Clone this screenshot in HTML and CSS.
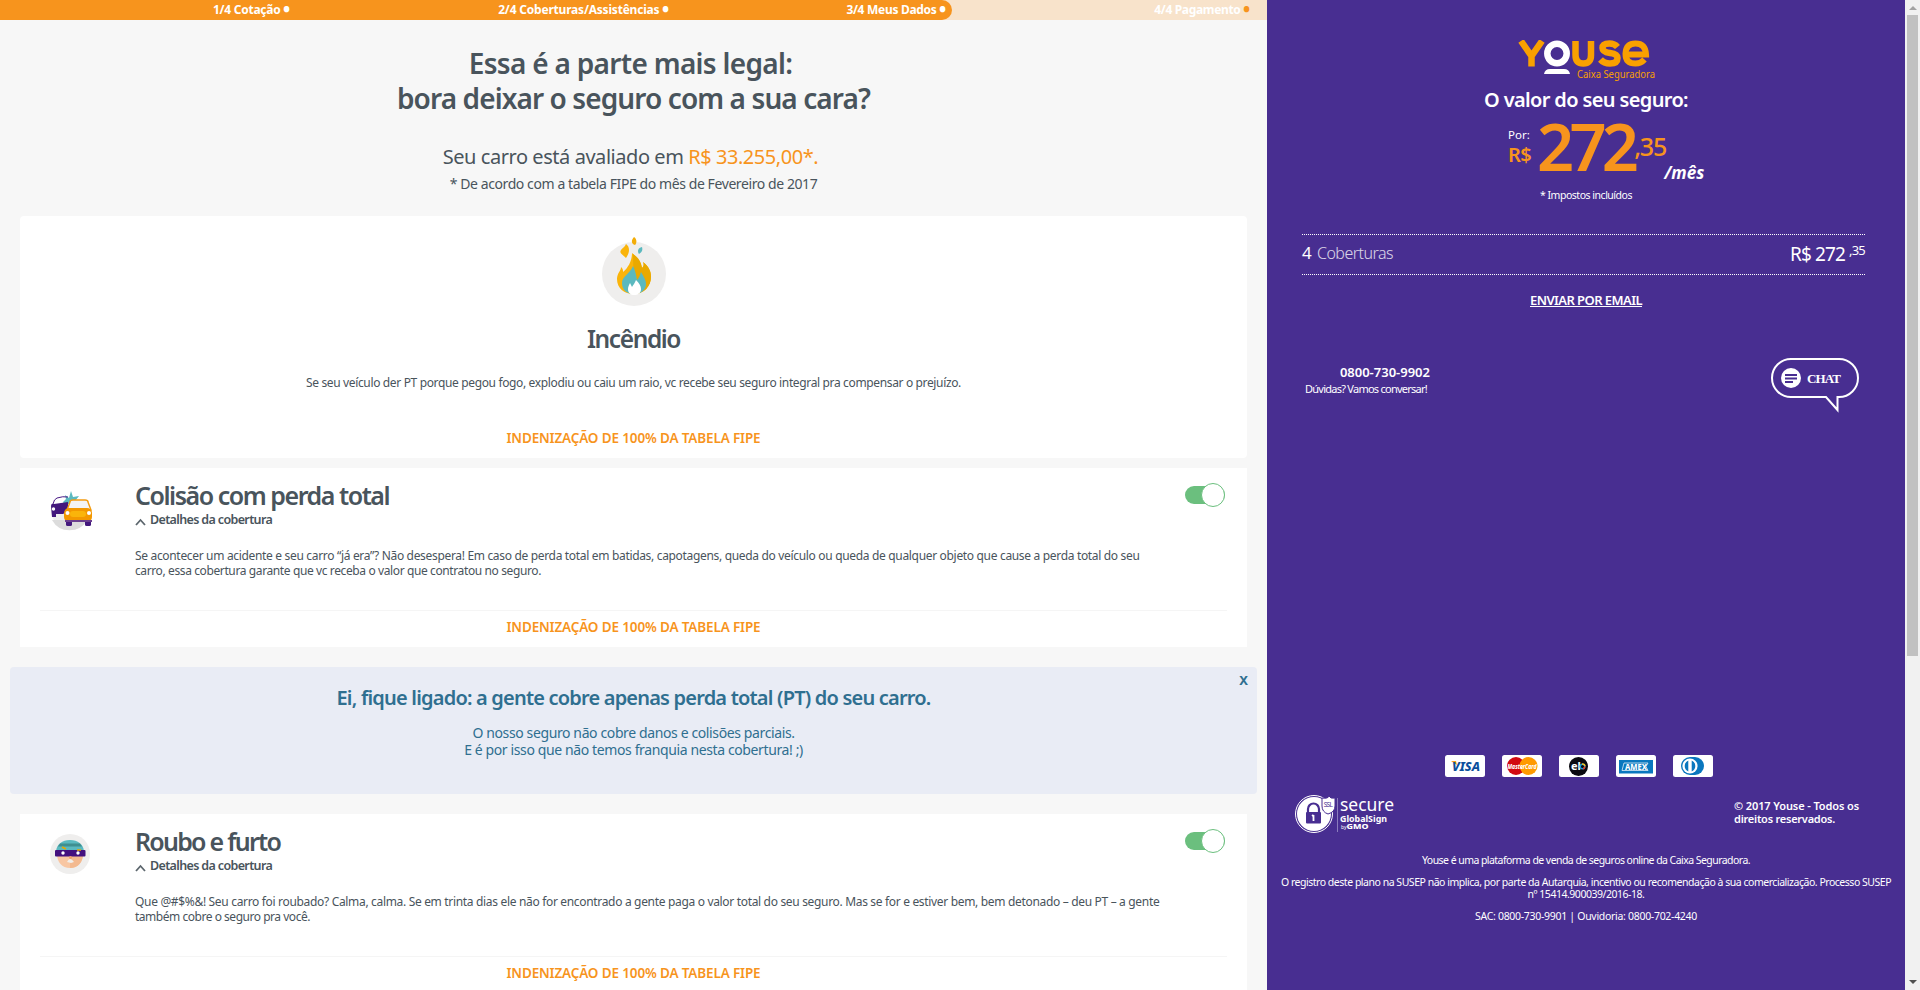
FILE: index.html
```html
<!DOCTYPE html>
<html lang="pt-BR">
<head>
<meta charset="utf-8">
<title>Youse Seguro Auto</title>
<link rel="stylesheet" href="styles.css">
</head>
<body>
<div class="app">
<main class="main">
  <div class="progress">
    <div class="step s1">1/4 Cotação <b class="dot">•</b></div>
    <div class="step s2">2/4 Coberturas/Assistências <b class="dot">•</b></div>
    <div class="step s3">3/4 Meus Dados <b class="dot">•</b></div>
    <div class="step s4">4/4 Pagamento <b class="dot">•</b></div>
  </div>
  <header class="intro">
    <h1><span class="title-a">Essa é a parte mais legal:</span><br><span class="title-b">bora deixar o seguro com a sua cara?</span></h1>
    <p class="value">Seu carro está avaliado em <em>R$ 33.255,00*.</em></p>
    <p class="note">* De acordo com a tabela FIPE do mês de Fevereiro de 2017</p>
  </header>

  <section class="card featured">
    <svg class="fire" width="64" height="70" viewBox="0 0 64 70">
      <circle cx="32" cy="38" r="32" fill="#efeeed"/>
      <path d="M30 17c6 5 9 9 10 15 2-2 2-4 1-6 6 5 8 9 8 15 0 9-7 17-17 17s-17-6-17-15c0-6 4-8 4-12 2 2 2 3 2 5 5-4 9-11 9-19z" fill="#fab40a"/>
      <path d="M31 18c6 4 8 8 9 14 2-2 2-4 1-6 6 5 8 9 8 15 0 9-7 17-17 17z" fill="#e9a900"/>
      <path d="M31 30c2 4 3 8 4 14 2-2 3-5 4-8 3 5 5 8 5 12 0 6-5 10-12 10s-12-4-12-11c0-7 8-9 11-17z" fill="#5bb9bf"/>
      <path d="M34 44c3 3 5 6 5 9 0 4-3 6-7 6-3 0-6-2-6-6 0-2 1-4 2-6l2 4c1-2 3-4 4-7z" fill="#fff"/>
      <path d="M24 8c4 3 4 8 0 14-4-4-7-5-5-8 1-2 4-3 5-6z" fill="#fab40a"/>
      <path d="M32 1c3 2 3 6 1 8-4-1-4-5-1-8z" fill="#f3ad08"/>
      <path d="M40 11c1 3 0 5-3 7-2-3-1-6 3-7z" fill="#5bb9bf"/>
    </svg>
    <h2>Incêndio</h2>
    <p class="desc">Se seu veículo der PT porque pegou fogo, explodiu ou caiu um raio, vc recebe seu seguro integral pra compensar o prejuízo.</p>
    <p class="cover">INDENIZAÇÃO DE 100% DA TABELA FIPE</p>
  </section>

  <section class="card">
    <div class="row">
      <svg class="badge" width="44" height="46" viewBox="0 0 44 46">
        <path d="M1 20a20 20 0 0 0 38 7z" fill="#eee"/>
        <path d="M2 29a20 20 0 0 0 35 0z" fill="#dcdcdc"/>
        <path d="M13 11l3-3-1-4 4 3 2-7 2 6 6-1-4 5 3 3H14z" fill="#5bb9bf"/>
        <path d="M3 13q1-5 4-6 6-2 11-1" fill="none" stroke="#4a1a86" stroke-width="1"/>
        <path d="M1 15q0-3 3-2l14-2v9l-5 3H6v3H2z" fill="#43187d"/>
        <circle cx="3.500" cy="18" r="1.700" fill="#fff"/>
        <path d="M17 19l3-8q0-2 3-2h12q3 0 3 2l3 8z" fill="#f4f4f4" stroke="#f39c12" stroke-width="1.400"/>
        <rect x="16" y="29" width="6" height="6" rx="1.500" fill="#43187d"/><rect x="35" y="29" width="6" height="6" rx="1.500" fill="#43187d"/>
        <rect x="14" y="17" width="28" height="14" rx="5" fill="#f39800"/>
        <rect x="20" y="20" width="16" height="6" rx="3" fill="#fab40a"/>
        <path d="M15 29h27v2H15z" fill="#6b3f8f"/>
        <circle cx="17.500" cy="22" r="2" fill="#fff"/><circle cx="39" cy="22" r="2" fill="#fff"/>
      </svg>
      <div class="body">
        <h3>Colisão com perda total</h3>
        <p class="details"><svg width="11" height="8" viewBox="0 0 11 8"><path d="M1 7l4.500-5L10 7" fill="none" stroke="#5c666d" stroke-width="1.800"/></svg>Detalhes da cobertura</p>
        <p class="text">Se acontecer um acidente e seu carro “já era”? Não desespera! Em caso de perda total em batidas, capotagens, queda do veículo ou queda de qualquer objeto que cause a perda total do seu<br><span class="tight">carro, essa cobertura garante que vc receba o valor que contratou no seguro.</span></p>
      </div>
      <div class="toggle"><i></i></div>
    </div>
    <p class="cover ruled">INDENIZAÇÃO DE 100% DA TABELA FIPE</p>
  </section>

  <aside class="notice">
    <span class="close">X</span>
    <h4>Ei, fique ligado: a gente cobre apenas perda total (PT) do seu carro.</h4>
    <p>O nosso seguro não cobre danos e colisões parciais.<br>E é por isso que não temos franquia nesta cobertura! ;)</p>
  </aside>

  <section class="card">
    <div class="row">
      <svg class="badge thief" width="40" height="40" viewBox="0 0 40 40">
        <circle cx="20" cy="20" r="20" fill="#efeeed"/>
        <path d="M7 20h26c0 8-5 14-13 14S7 28 7 20z" fill="#f8c6a2"/>
        <path d="M20 20h13c0 8-5 14-13 14z" fill="#f3b98f"/>
        <path d="M6 17C7 10 12 6 20 6s13 4 14 11z" fill="#5bb9bf"/>
        <path d="M10 9.500h20l2 3H8z" fill="#3f8f90"/>
        <rect x="5" y="16" width="30.500" height="6.500" rx="1" fill="#43107e"/>
        <path d="M12 13l4 2M27 16h4" stroke="#e9a900" stroke-width="1.500"/>
        <circle cx="13" cy="19" r="1.700" fill="#fff"/><circle cx="28" cy="19" r="1.700" fill="#fff"/>
        <path d="M17 28q3-6 7 0l-3 1z" fill="#f1eeea"/><circle cx="20.500" cy="23.500" r="1.500" fill="#f2a26d"/>
      </svg>
      <div class="body">
        <h3 class="theft">Roubo e furto</h3>
        <p class="details"><svg width="11" height="8" viewBox="0 0 11 8"><path d="M1 7l4.500-5L10 7" fill="none" stroke="#5c666d" stroke-width="1.800"/></svg>Detalhes da cobertura</p>
        <p class="text">Que @#$%&amp;! Seu carro foi roubado? Calma, calma. Se em trinta dias ele não for encontrado a gente paga o valor total do seu seguro. Mas se for e estiver bem, bem detonado – deu PT – a gente<br><span class="tighter">também cobre o seguro pra você.</span></p>
      </div>
      <div class="toggle"><i></i></div>
    </div>
    <p class="cover ruled">INDENIZAÇÃO DE 100% DA TABELA FIPE</p>
  </section>
</main>

<aside class="side">
  <svg class="logo" width="140" height="42" viewBox="0 0 140 42">
    <g fill="none" stroke="#f9a000" stroke-width="6.500">
      <path d="M3 1l10.500 15L24 1M13.500 14v12.500"/>
      <path d="M57.500 1v14q0 8.500 7.800 8.500T73 15V1"/>
      <path d="M99.500 7q-3-3.500-8-3.500-7 0-7 4.500 0 4 7.500 5t7.500 5q0 5.500-7.500 5.500-6 0-9.500-4"/>
      <path d="M106 14.500h22q-.5-11-10.500-11-9.500 0-10 10.200 0 9.800 10 9.800 5.500 0 9-4" stroke-width="6"/>
    </g>
    <ellipse cx="39" cy="13.500" rx="9.700" ry="9.700" fill="none" stroke="#fff" stroke-width="6.500"/>
    <path d="M26 34q1-5 6-5h14q5 0 6 5z" fill="#fff"/>
    <text class="logo-sub" x="59" y="38" textLength="78" lengthAdjust="spacingAndGlyphs">Caixa Seguradora</text>
  </svg>
  <h2 class="side-title">O valor do seu seguro:</h2>
  <div class="price">
    <div class="unit"><small>Por:</small>R$</div>
    <span class="int">272</span><span class="dec">,35</span><span class="per">/mês</span>
  </div>
  <p class="tax">* Impostos incluídos</p>
  <div class="summary">
    <span class="count">4</span><span class="label">Coberturas</span>
    <span class="total">R$ 272</span><span class="cents">,35</span>
  </div>
  <p class="email"><a>ENVIAR POR EMAIL</a></p>
  <div class="contact">
    <div class="phone"><strong>0800-730-9902</strong>Dúvidas? Vamos conversar!</div>
    <svg width="90" height="56" viewBox="0 0 90 56">
      <path d="M21 2h48a19 19 0 0 1 0 38h-1.500v13L56 40H21a19 19 0 0 1 0-38z" fill="none" stroke="#fff" stroke-width="2"/>
      <circle cx="21" cy="21" r="10" fill="#fff"/>
      <path d="M15 18h12M15 21.500h12M15 25h8" stroke="#482e91" stroke-width="2"/>
      <text class="chat" x="37" y="26" textLength="34">CHAT</text>
    </svg>
  </div>
  <div class="cards">
    <svg width="40" height="22" viewBox="0 0 40 22"><rect width="40" height="22" rx="2.500" fill="#fff"/><path d="M6 6h5l1 4z" fill="#f7a11a"/><text class="visa" x="7" y="15.500" textLength="28" lengthAdjust="spacingAndGlyphs">VISA</text></svg>
    <svg width="40" height="22" viewBox="0 0 40 22"><rect width="40" height="22" rx="2.500" fill="#fff"/><circle cx="14" cy="11" r="9" fill="#d20a11"/><circle cx="26.500" cy="11" r="9" fill="#ff9a00"/><text class="mc" x="5.500" y="13.500" textLength="29" lengthAdjust="spacingAndGlyphs">MasterCard</text></svg>
    <svg width="40" height="22" viewBox="0 0 40 22"><rect width="40" height="22" rx="2.500" fill="#fff"/><circle cx="19.500" cy="11.500" r="9.500" fill="#0b0a10"/><text class="elo" x="12" y="14.500">el</text><circle cx="23.500" cy="11.500" r="2.300" fill="none" stroke="#1c9bd8" stroke-width="1.500"/><path d="M23 9.200a2.300 2.300 0 0 1 3 2" fill="none" stroke="#f7c51e" stroke-width="1.500"/><path d="M25.800 11.500a2.300 2.300 0 0 1-1.800 2.300" fill="none" stroke="#e5402a" stroke-width="1.500"/></svg>
    <svg width="40" height="22" viewBox="0 0 40 22"><rect width="40" height="22" rx="2.500" fill="#fff"/><rect x="3" y="5" width="34" height="13.500" fill="#0a77be"/><path d="M8 8h24l-2 3.500 2 4H6z" fill="none" stroke="#fff" stroke-width=".7"/><text class="amex" x="9" y="14.800" textLength="22" lengthAdjust="spacingAndGlyphs">AMEX</text></svg>
    <svg width="40" height="22" viewBox="0 0 40 22"><rect width="40" height="22" rx="2.500" fill="#fff"/><path d="M17 2h5a9 9 0 0 1 0 18h-5z" fill="#0a77be"/><circle cx="17" cy="11" r="9" fill="#0a77be"/><circle cx="17" cy="11" r="7.600" fill="#fff"/><path d="M15.300 5.500a6 6 0 0 0 0 11zM18.700 5.500a6 6 0 0 1 0 11z" fill="#0a77be"/></svg>
  </div>
  <div class="seal-row">
    <svg width="102" height="40" viewBox="0 0 102 40">
      <circle cx="20" cy="20" r="18.500" fill="none" stroke="#fff"/><circle cx="20" cy="20" r="17" fill="#fff"/>
      <path d="M28 4q6 1 7-2 1 3 6 2v8q0 6-7 8-6-2-6-8z" fill="#fff" stroke="#482e91"/>
      <path d="M14 19v-4a5.500 5.500 0 0 1 11 0v4" fill="none" stroke="#482e91" stroke-width="2.200"/><rect x="12" y="18" width="15" height="11.500" rx="1" fill="#482e91"/>
      <path d="M19.500 21v6M18 22l1.500-1" stroke="#fff" stroke-width="1.800"/>
      <text class="ssl" x="29.800" y="12.500" textLength="9">SSL</text>
      <path d="M43.500 4v34" stroke="#8b7bbd"/>
      <text class="sec" x="46" y="17" textLength="54" lengthAdjust="spacingAndGlyphs">secure</text>
      <text class="gs" x="46" y="27.500" textLength="47" lengthAdjust="spacingAndGlyphs">GlobalSign</text>
      <text class="by" x="47" y="35">by</text><text class="gmo" x="52.500" y="35" textLength="22" lengthAdjust="spacingAndGlyphs">GMO</text>
    </svg>
    <p class="copy">© 2017 Youse - Todos os<br><span class="rights">direitos reservados.</span></p>
  </div>
  <div class="legal">
    <p class="about">Youse é uma plataforma de venda de seguros online da Caixa Seguradora.</p>
    <p>O registro deste plano na SUSEP não implica, por parte da Autarquia, incentivo ou recomendação à sua comercialização. Processo SUSEP<br>nº 15414.900039/2016-18.</p>
    <p class="sac">SAC: 0800-730-9901 | Ouvidoria: 0800-702-4240</p>
  </div>
</aside>
<div class="scroll"><i class="up"></i><div class="thumb"></div><i class="down"></i></div>
</div>
</body>
</html>
```
FILE: styles.css
```css
* { box-sizing: border-box; }
body, h1, h2, h3, h4, p { margin: 0; }
body { font-family: "Noto Sans", "Open Sans", sans-serif; color: #49545c; background: #f7f7f7; overflow: hidden; }
.app { display: grid; grid-template-columns: 1267px 638px 15px; height: 990px; overflow: hidden; }
.main { height: 990px; overflow: hidden; }

.progress { display: flex; height: 20px; background: linear-gradient(90deg, #f7941d 50%, #f8e3cb 50%); color: #fff; font-size: 12px; font-weight: 700; line-height: 19px; text-align: right; white-space: nowrap; }
.step { background: #f7941d; }
.s1 { width: 290px; letter-spacing: -.25px; }
.s2 { width: 379px; letter-spacing: -.2px; }
.s3 { width: 283px; padding-right: 6px; border-radius: 0 10px 10px 0; letter-spacing: -.3px; }
.s4 { width: 298px; background: none; letter-spacing: -.33px; }
.dot { font-size: 17px; line-height: 0; vertical-align: -2px; letter-spacing: 0; }
.s4 .dot { color: #f7941d; }

.intro { padding: 26px 0 22px; text-align: center; }
h1 { font-size: 28px; line-height: 35px; font-weight: 600; }
.title-a { padding-right: 6px; letter-spacing: -.69px; }
.title-b { letter-spacing: -.9px; }
.value { margin-top: 27px; padding-right: 6px; font-size: 20px; line-height: 28px; letter-spacing: -.445px; }
.value em { font-style: normal; color: #f7941d; }
.note { margin-top: 3px; font-size: 14px; line-height: 20px; letter-spacing: -.412px; }

.card { margin: 0 20px; padding: 10px 20px; background: #fff; }
.featured { margin-bottom: 10px; padding-top: 20px; text-align: center; border-radius: 4px; }
.fire { display: block; margin: 0 auto 16px; }
.featured h2 { font-size: 24.5px; line-height: 34px; font-weight: 600; letter-spacing: -1.4px; }
.desc { margin: 19px 0 37px; font-size: 12px; line-height: 16px; letter-spacing: -.355px; }
.cover { color: #f7941d; font-size: 13.5px; line-height: 20px; font-weight: 600; letter-spacing: -.142px; text-align: center; }
.ruled { margin-top: 32px; padding-top: 6px; border-top: 1px solid #f5f5f5; }

.row { display: flex; }
.badge { flex: none; margin: 13px 41px 0 10px; }
.thief { margin: 10px 45px 0 10px; }
.body { flex: 1; min-width: 0; white-space: nowrap; }
h3 { margin-bottom: -1px; padding-top: 1px; font-size: 25px; line-height: 33px; font-weight: 600; letter-spacing: -1.46px; }
.theft { letter-spacing: -1.75px; }
.details { display: flex; align-items: center; gap: 4px; font-size: 12.5px; line-height: 18px; font-weight: 600; letter-spacing: -.64px; }
.details svg { margin-top: 4px; }
.text { margin-top: 19px; font-size: 12px; line-height: 15px; letter-spacing: -.325px; }
.tight { letter-spacing: -.387px; }
.tighter { letter-spacing: -.472px; }
.toggle { flex: none; width: 40px; height: 18px; margin: 8px 2px 0 0; border-radius: 9px; background: #6bbf7e; }
.toggle i { display: block; width: 24px; height: 24px; margin: -3px 0 0 16px; border: 1px solid #6bbf7e; border-radius: 50%; background: #fff; }

.notice { position: relative; margin: 20px 10px; padding: 17px 0 36px; border-radius: 4px; background: #e9ecf5; color: #2f6f90; text-align: center; }
.close { position: absolute; top: 4px; right: 9px; font-size: 13px; line-height: 18px; font-weight: 700; }
h4 { font-size: 20px; line-height: 28px; font-weight: 600; letter-spacing: -.804px; }
.notice p { margin-top: 12px; font-size: 14px; line-height: 17px; letter-spacing: -.382px; }

.side { background: #482e91; color: #fff; padding-top: 40px; height: 990px; white-space: nowrap; }
.logo { display: block; margin: 0 0 4px 251px; }
.logo-sub { font-size: 10.5px; fill: #f9a000; }
.side-title { font-size: 20px; line-height: 28px; font-weight: 600; letter-spacing: -.638px; text-align: center; }
.price { display: flex; height: 71px; padding-left: 241px; color: #f7941d; }
.unit { width: 29px; padding-top: 13px; font-size: 20px; line-height: 24px; font-weight: 600; letter-spacing: -.5px; }
.unit small { display: block; color: #fff; font-size: 11.5px; line-height: 16px; font-weight: 400; letter-spacing: 0; }
.int { margin-top: -1px; font-size: 65px; line-height: 66px; font-weight: 600; letter-spacing: -4.8px; }
.dec { margin-top: 18px; font-size: 25px; line-height: 28px; font-weight: 500; letter-spacing: -1.15px; }
.per { margin: 49px 0 0 -2px; color: #fff; font-size: 17px; line-height: 20px; font-weight: 700; font-style: italic; }
.tax { margin-top: 3px; font-size: 10.5px; line-height: 14px; letter-spacing: -.48px; text-align: center; }
.summary { display: flex; height: 41px; margin: 32px 40px 0 35px; border-top: 1px dotted #fff; border-bottom: 1px dotted #fff; }
.count { width: 15px; font-size: 17px; line-height: 36px; }
.label { font-size: 16px; line-height: 36px; font-weight: 300; letter-spacing: -.517px; opacity: .8; }
.total { margin-left: auto; font-size: 19px; line-height: 38px; letter-spacing: -.872px; }
.cents { margin-left: 4px; font-size: 13px; line-height: 30px; letter-spacing: -.786px; }
.email { margin-top: 15px; font-size: 13px; line-height: 20px; font-weight: 600; letter-spacing: -.563px; text-align: center; }
.email a { text-decoration: underline; }
.contact { display: flex; justify-content: space-between; margin: 47px 45px 0 38px; height: 56px; }
.phone { width: 125px; padding-top: 6px; font-size: 11px; line-height: 16px; letter-spacing: -.749px; }
.phone strong { display: block; font-size: 13px; line-height: 18px; font-weight: 600; letter-spacing: 0; text-align: right; }
.chat { font: 700 13px "Liberation Serif", serif; fill: #fff; }
.cards { display: flex; gap: 17px; margin: 342px 0 0 178px; }
.visa { font-size: 13px; font-weight: 800; font-style: italic; fill: #0b4f9c; }
.mc { font-size: 7px; font-weight: 800; font-style: italic; fill: #fff; }
.elo { font-size: 11px; font-weight: 700; fill: #fff; }
.amex { font-size: 8.5px; font-weight: 800; fill: #fff; }
.seal-row { display: flex; justify-content: space-between; margin: 17px 46px 20px 27px; }
.ssl { font-size: 6.5px; fill: #482e91; }
.sec { font-size: 18px; fill: #fff; }
.gs { font-size: 9px; font-weight: 700; fill: #fff; }
.by { font-size: 5px; fill: #fff; }
.gmo { font-size: 6.5px; font-weight: 800; fill: #fff; }
.copy { width: 125px; padding-top: 5px; font-size: 11px; line-height: 13px; font-weight: 600; letter-spacing: -.107px; }
.rights { letter-spacing: -.242px; }
.legal { display: grid; gap: 10px; font-size: 10.5px; line-height: 12px; letter-spacing: -.473px; text-align: center; }
.about { letter-spacing: -.548px; }
.sac { letter-spacing: -.297px; }

.scroll { display: flex; flex-direction: column; background: #f1f1f1; }
.scroll i { width: 0; height: 0; border: 4px solid transparent; }
.scroll .up { margin: 2px 0 5px 4px; border-bottom-color: #a3a3a3; }
.thumb { width: 11px; height: 641px; margin-left: 2px; background: #c1c1c1; }
.scroll .down { margin: auto 0 2px 4px; border-top-color: #505050; }
```
